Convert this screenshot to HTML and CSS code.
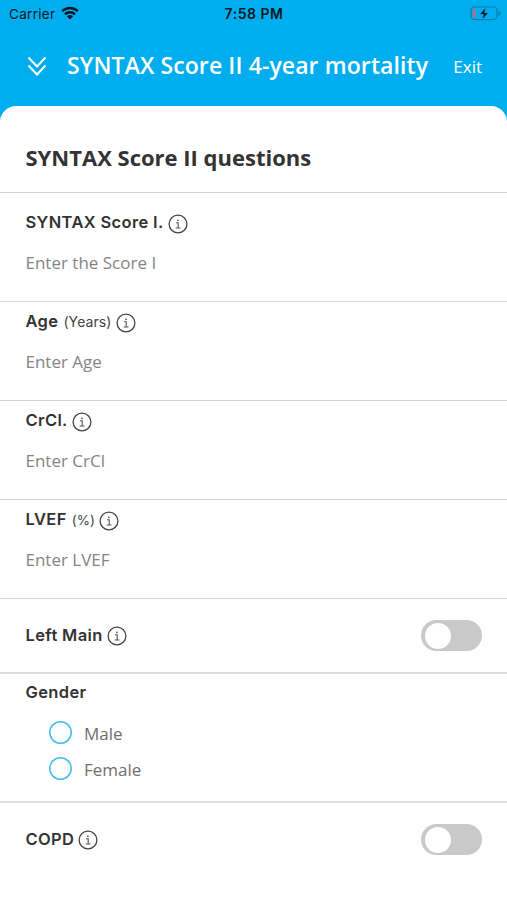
FILE: index.html
```html
<!DOCTYPE html>
<html lang="en">
<head>
<meta charset="utf-8">
<title>SYNTAX Score II</title>
<link rel="stylesheet" href="styles.css">
</head>
<body>
<svg class="defs" width="0" height="0" aria-hidden="true">
  <symbol id="info" viewBox="0 0 20 20">
    <circle cx="10" cy="10" r="8.900" fill="none" stroke="#444" stroke-width="1.300"/>
    <circle cx="9.900" cy="6.300" r=".9" fill="#555"/>
    <path d="M8 8.800h2.200v5M7.700 14h4.800" fill="none" stroke="#555" stroke-width="1.100"/>
  </symbol>
</svg>
<header class="top">
  <div class="status">
    <div class="carrier"><span>Carrier</span>
      <svg class="wifi" viewBox="0 0 18 14"><path d="M1.200 5.200a11 11 0 0 1 15.600 0M4 8.300a7 7 0 0 1 10 0" fill="none" stroke="#061923" stroke-width="2.500"/><path d="M5.900 10.200a4.400 4.400 0 0 1 6.200 0L9 13.500z" fill="#061923"/></svg>
    </div>
    <div class="time">7:58 PM</div>
    <svg class="battery" viewBox="0 0 31 15"><rect x="1" y="1" width="26" height="12.600" rx="3.600" fill="none" stroke="#087fae" stroke-width="1.200"/><path d="M28.500 5v5q2-1 2-2.500T28.500 5" fill="#087fae"/><rect x="2.700" y="3" width="3" height="8.600" rx="1" fill="#a8708a"/><path d="M15.800 1.500 9.600 8.300h3.700l-1.100 5.400 6.200-7h-3.700z" fill="#061923" stroke="#00aeef" stroke-width=".6"/></svg>
  </div>
  <nav class="nav">
    <svg class="chevrons" viewBox="0 0 20 21"><path d="M1.500 1.500 10 10.500l8.500-9M1.500 9.500l8.500 9 8.500-9" fill="none" stroke="#fff" stroke-width="1.900"/></svg>
    <h1>SYNTAX Score II 4-year mortality</h1>
    <span class="exit">Exit</span>
  </nav>
</header>
<main class="sheet">
  <h2>SYNTAX Score II questions</h2>
  <section class="field first">
    <div class="label"><b>SYNTAX Score I.</b><svg class="info"><use href="#info"/></svg></div>
    <div class="entry">Enter the Score I</div>
  </section>
  <section class="field">
    <div class="label"><b>Age</b><small>(Years)</small><svg class="info"><use href="#info"/></svg></div>
    <div class="entry">Enter Age</div>
  </section>
  <section class="field">
    <div class="label"><b>CrCl.</b><svg class="info"><use href="#info"/></svg></div>
    <div class="entry">Enter CrCl</div>
  </section>
  <section class="field">
    <div class="label"><b>LVEF</b><small class="percent">(%)</small><svg class="info"><use href="#info"/></svg></div>
    <div class="entry">Enter LVEF</div>
  </section>
  <section class="switch-row">
    <div class="label"><b>Left Main</b><svg class="info"><use href="#info"/></svg></div>
    <span class="toggle"></span>
  </section>
  <section class="gender">
    <div class="label"><b>Gender</b></div>
    <div class="option"><i class="radio"></i><span>Male</span></div>
    <div class="option"><i class="radio"></i><span>Female</span></div>
  </section>
  <section class="switch-row last">
    <div class="label"><b>COPD</b><svg class="info"><use href="#info"/></svg></div>
    <span class="toggle"></span>
  </section>
</main>
</body>
</html>
```
FILE: styles.css
```css
* { box-sizing: border-box; }
body { margin: 0; height: 900px; overflow: hidden; background: #00aeef; font-family: "Open Sans", sans-serif; color: #333; display: flex; flex-direction: column; }
.defs { position: absolute; }
h1, h2 { margin: 0; white-space: nowrap; }
.top { height: 106px; flex: none; }
.status { height: 28px; padding: 0 6px 0 9px; display: grid; grid-template-columns: 1fr auto 1fr; align-items: center; font: 500 13px/28px Inter, sans-serif; color: #061923; }
.carrier { display: flex; align-items: center; gap: 6px; font-size: 13.5px; letter-spacing: .3px; font-weight: 400; }
.wifi { width: 18px; height: 14px; margin-top: -2px; }
.time { font-size: 14px; font-weight: 600; letter-spacing: .5px; margin-left: -2px; }
.battery { width: 31px; height: 15px; justify-self: end; margin-top: -2px; }
.nav { height: 76px; padding: 0 25px 0 27px; display: flex; align-items: center; color: #fff; }
.chevrons { width: 20px; height: 21px; margin: 0 20px 0 0; }
h1 { font-size: 23px; font-weight: 600; line-height: 30px; letter-spacing: .1px; margin-top: -2px; }
.exit { margin-left: auto; font-size: 17px; }
.sheet { flex: 1; background: #fff; border-radius: 16px 16px 0 0; }
h2 { height: 87px; padding: 34px 25.5px 0; font-size: 22px; line-height: 34px; font-weight: 700; border-bottom: 1px solid #d2d2d2; }
.field { height: 99px; padding: 7px 25.5px 0; border-bottom: 1px solid #d4d4d4; }
.first { height: 109px; padding-top: 17px; }
.label { height: 24px; display: flex; align-items: center; font: 16px/24px Inter, sans-serif; white-space: nowrap; }
.label b { font-size: 16.5px; font-weight: 600; letter-spacing: .35px; }
.label small { font-size: 14px; margin: 2px 0 0 5px; color: #444; letter-spacing: .1px; }
.label .percent { font-size: 13.5px; }
.info { width: 20px; height: 20px; margin: 3px 0 0 4px; flex: none; }
.entry { margin-top: 17px; font-size: 17px; line-height: 24px; color: #858585; white-space: nowrap; }
.switch-row { height: 75px; padding: 0 25px 0 25.5px; display: flex; align-items: center; justify-content: space-between; border-bottom: 2px solid #dedede; }
.switch-row .label { margin-top: -2px; }
.last { border: 0; height: 73px; }
.toggle { width: 61px; height: 31px; border-radius: 16px; background: #c9c9c9; padding: 2.500px 3.500px; }
.toggle::before { content: ""; display: block; width: 26px; height: 26px; border-radius: 50%; background: #fff; }
.gender { height: 129px; padding: 6px 25.5px 0; border-bottom: 2px solid #dedede; }
.gender .label { margin-bottom: 12px; }
.option { height: 35.5px; padding-left: 23.5px; display: flex; align-items: center; gap: 12px; font-size: 17px; color: #6f6f6f; }
.radio { width: 23px; height: 23px; margin-top: -2px; border-radius: 50%; box-shadow: inset 0 0 0 1.500px #45bdf0; }
```
